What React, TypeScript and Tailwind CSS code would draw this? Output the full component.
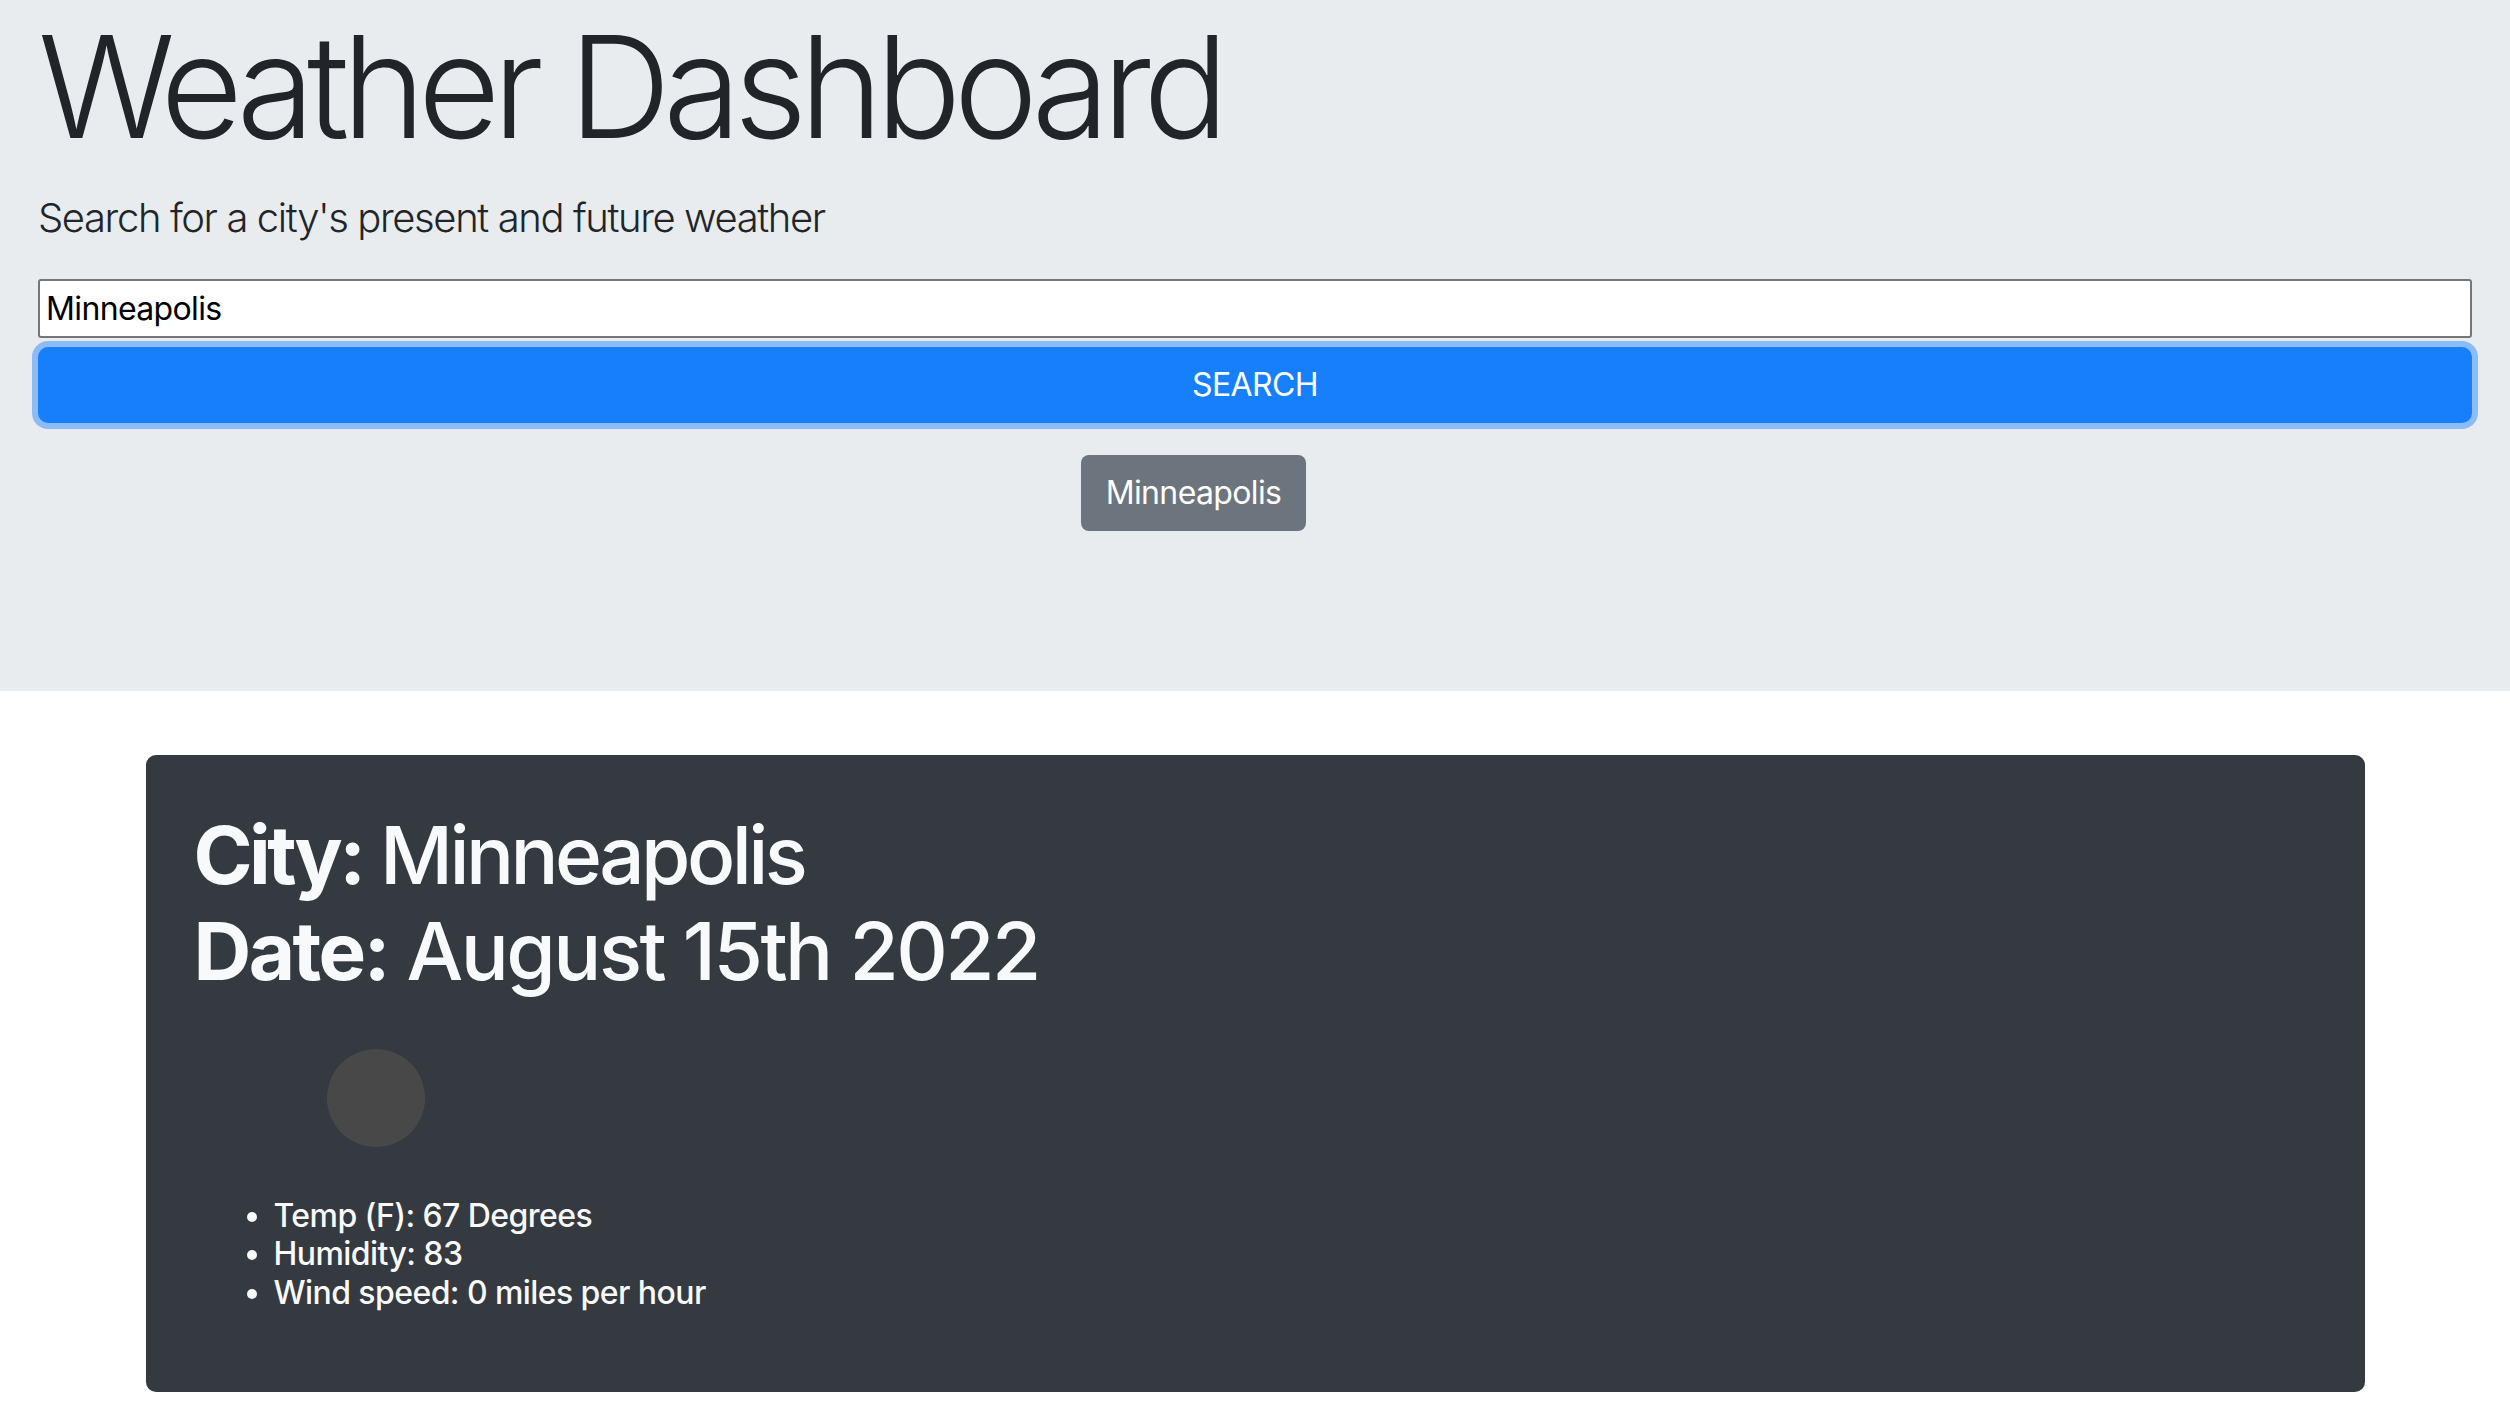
import { useState } from "react";

const stats = [
  "Temp (F): 67 Degrees",
  "Humidity: 83",
  "Wind speed: 0 miles per hour",
];

export default function App() {
  const [city, setCity] = useState("Minneapolis");

  return (
    <div className="min-h-screen bg-white font-['Inter','Liberation_Sans',sans-serif]">
      <header className="h-[691px] bg-[#e9ecef] px-[38px]">
        <h1 className="mb-[15px] text-[142px] leading-[1.217] font-light tracking-[-0.053em] text-[#212529]">
          Weather Dashboard
        </h1>
        <p className="mb-[31px] text-[40px] leading-[1.5] font-light tracking-[-0.035em] text-[#212529]">
          Search for a city's present and future weather
        </p>
        <input
          value={city}
          onChange={(e) => setCity(e.target.value)}
          className="block h-[59px] w-full rounded-[3px] border-2 border-[#767676] bg-white px-[6px] text-[32px] tracking-[-0.02em] text-black outline-none"
        />
        <button className="mt-[9px] block h-[76px] w-full rounded-[10px] bg-[#177ffb] text-[32px] tracking-[-0.02em] text-white uppercase ring-[6px] ring-[#8bbcf8]">
          Search
        </button>
        <div className="mt-[32px] flex justify-center pr-[123px]">
          <button className="h-[76px] rounded-[8px] bg-[#6c757d] px-[25px] text-[32px] tracking-[-0.02em] text-white">
            Minneapolis
          </button>
        </div>
      </header>

      <main className="pt-[64px]">
        <section className="mx-auto h-[637px] w-[2219px] rounded-[10px] bg-[#343a40] pt-[52px] pl-[48px] text-[#f8f9fa]">
          <h2 className="text-[80px] leading-[1.2] font-medium tracking-[-0.032em]">
            <span className="tracking-[-0.045em]">
              <span className="font-bold">City:</span> Minneapolis
            </span>
            <br />
            <span className="font-bold">Date:</span> August 15th 2022
          </h2>
          <div className="mt-[50px] ml-[133px] h-[98px] w-[98px] rounded-full bg-[#484848]" />
          <ul className="mt-[50px] list-disc pl-[80px] text-[32px] leading-[1.2] font-medium tracking-[-0.018em]">
            {stats.map((s) => (
              <li key={s}>{s}</li>
            ))}
          </ul>
        </section>
      </main>
    </div>
  );
}
